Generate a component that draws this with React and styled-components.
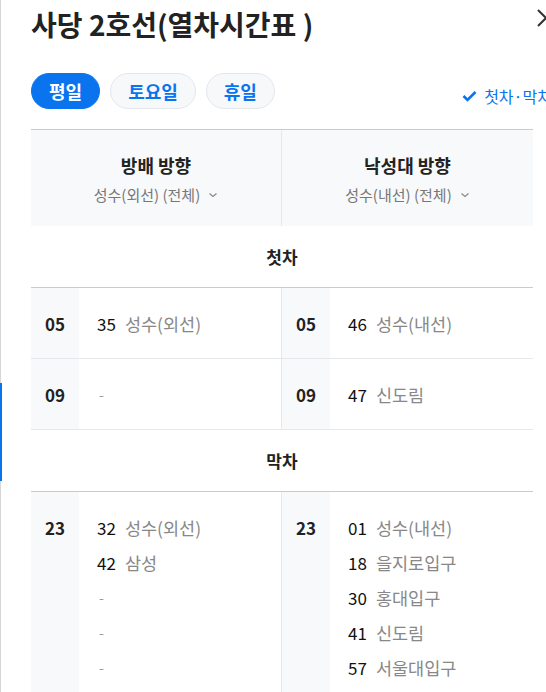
import React from 'react';
import styled, { createGlobalStyle } from 'styled-components';

const GlobalStyle = createGlobalStyle`
  html, body {
    margin: 0;
    padding: 0;
    background: #fff;
    overflow: hidden;
  }
  body {
    font-family: 'Noto Sans CJK KR', 'Noto Sans', sans-serif;
    color: #222;
  }
`;

const BLUE = '#0a74ef';

const schedule = [
  {
    title: '첫차',
    rows: [
      { hour: '05', left: [['35', '성수(외선)']], right: [['46', '성수(내선)']] },
      { hour: '09', left: [null], right: [['47', '신도림']] },
    ],
  },
  {
    title: '막차',
    rows: [
      {
        hour: '23',
        left: [['32', '성수(외선)'], ['42', '삼성'], null, null, null],
        right: [
          ['01', '성수(내선)'],
          ['18', '을지로입구'],
          ['30', '홍대입구'],
          ['41', '신도림'],
          ['57', '서울대입구'],
        ],
      },
    ],
  },
];

const Chevron = () => (
  <svg width="10" height="10" viewBox="0 0 10 10">
    <path d="M1.5 3.5 L5 6.5 L8.5 3.5" fill="none" stroke="#888" strokeWidth="1.2" />
  </svg>
);

const Check = () => (
  <svg width="15" height="12" viewBox="0 0 15 12">
    <path d="M1.5 6 L5.5 10 L13.5 2" fill="none" stroke={BLUE} strokeWidth="2.6" />
  </svg>
);

const Times = ({ hour, items }) => (
  <Half>
    <Hour>{hour}</Hour>
    <List>
      {items.map((it, i) =>
        it ? (
          <Entry key={i}>
            <Minute>{it[0]}</Minute>
            <Station>{it[1]}</Station>
          </Entry>
        ) : (
          <Entry key={i}>
            <Dash>-</Dash>
          </Entry>
        )
      )}
    </List>
  </Half>
);

const App = () => {
  return (
    <Panel>
      <GlobalStyle />
      <TopBar>
        <Title>사당 2호선(열차시간표 )</Title>
        <Close aria-label="닫기">
          <svg width="20" height="20" viewBox="0 0 20 20">
            <path d="M2 2 L18 18 M18 2 L2 18" stroke="#333" strokeWidth="2" />
          </svg>
        </Close>
      </TopBar>
      <Filters>
        <Pills>
          <Pill active>평일</Pill>
          <Pill>토요일</Pill>
          <Pill>휴일</Pill>
        </Pills>
        <Toggle>
          <Check />
          첫차·막차
        </Toggle>
      </Filters>
      <Table>
        <HeadRow>
          <HeadCell>
            <Direction>방배 방향</Direction>
            <Sub>
              성수(외선) (전체) <Chevron />
            </Sub>
          </HeadCell>
          <HeadCell>
            <Direction>낙성대 방향</Direction>
            <Sub>
              성수(내선) (전체) <Chevron />
            </Sub>
          </HeadCell>
        </HeadRow>
        {schedule.map((sec) => (
          <React.Fragment key={sec.title}>
            <SectionTitle>{sec.title}</SectionTitle>
            <SectionBody>
              {sec.rows.map((row) => (
                <Row key={row.hour}>
                  <Times hour={row.hour} items={row.left} />
                  <Times hour={row.hour} items={row.right} />
                </Row>
              ))}
            </SectionBody>
          </React.Fragment>
        ))}
      </Table>
    </Panel>
  );
};

const Panel = styled.div`
  position: relative;
  width: 521px;
  min-height: 692px;
  padding: 6px 0 0 30px;
  border-left: 1px solid #d6d6d6;
  &::before {
    content: '';
    position: absolute;
    left: -1px;
    top: 383px;
    width: 2px;
    height: 98px;
    background: ${BLUE};
  }
`;

const TopBar = styled.div`
  display: flex;
  align-items: center;
  justify-content: space-between;
  height: 36px;
`;

const Title = styled.h1`
  margin: 0;
  font-size: 28px;
  font-weight: 700;
  line-height: 36px;
  color: #222;
`;

const Close = styled.button`
  border: none;
  background: none;
  padding: 0;
  margin-right: -4px;
  margin-top: -12px;
  display: flex;
  cursor: pointer;
`;

const Filters = styled.div`
  display: flex;
  align-items: center;
  justify-content: space-between;
  margin-top: 31px;
  height: 36px;
`;

const Pills = styled.div`
  display: flex;
  gap: 10px;
`;

const Pill = styled.button`
  height: 36px;
  padding: 0 17px;
  border-radius: 18px;
  border: 1px solid ${(p) => (p.active ? BLUE : '#e3e7ec')};
  background: ${(p) => (p.active ? BLUE : '#f6f8fa')};
  color: ${(p) => (p.active ? '#fff' : BLUE)};
  font-family: inherit;
  font-size: 18px;
  font-weight: 700;
  cursor: pointer;
`;

const Toggle = styled.div`
  display: flex;
  align-items: center;
  gap: 7px;
  margin-top: 10px;
  font-size: 16px;
  color: ${BLUE};
  white-space: nowrap;
`;

const Table = styled.div`
  width: 502px;
  margin-top: 20px;
  border-top: 1px solid #c7ccd2;
`;

const HeadRow = styled.div`
  display: grid;
  grid-template-columns: 1fr 1fr;
  background: #f8f9fb;
  height: 96px;
`;

const HeadCell = styled.div`
  display: flex;
  flex-direction: column;
  align-items: center;
  justify-content: center;
  gap: 7px;
  &:first-child {
    border-right: 1px solid #e6e9ec;
  }
`;

const Direction = styled.div`
  font-size: 18px;
  font-weight: 700;
  line-height: 26px;
  color: #222;
`;

const Sub = styled.div`
  display: flex;
  align-items: center;
  gap: 8px;
  font-size: 15px;
  line-height: 20px;
  color: #777;
`;

const SectionTitle = styled.div`
  height: 61px;
  display: flex;
  align-items: center;
  justify-content: center;
  font-size: 17px;
  font-weight: 700;
  color: #222;
  border-bottom: 1px solid #c7ccd2;
`;

const SectionBody = styled.div``;

const Row = styled.div`
  display: grid;
  grid-template-columns: 1fr 1fr;
  border-bottom: 1px solid #e6e8eb;
`;

const Half = styled.div`
  display: flex;
  &:first-child {
    border-right: 1px solid #e6e9ec;
  }
`;

const Hour = styled.div`
  width: 48px;
  flex-shrink: 0;
  background: #f8f9fb;
  padding: 18px 0 17px;
  text-align: center;
  font-size: 17px;
  font-weight: 700;
  line-height: 35px;
  color: #222;
`;

const List = styled.div`
  padding: 18px 0 17px 18px;
`;

const Entry = styled.div`
  display: flex;
  gap: 9px;
  font-size: 17px;
  line-height: 35px;
`;

const Minute = styled.span`
  color: #111;
`;

const Station = styled.span`
  color: #888;
  font-size: 17.5px;
`;

const Dash = styled.span`
  color: #999;
  font-size: 14px;
  padding-left: 2px;
`;

export default App;
